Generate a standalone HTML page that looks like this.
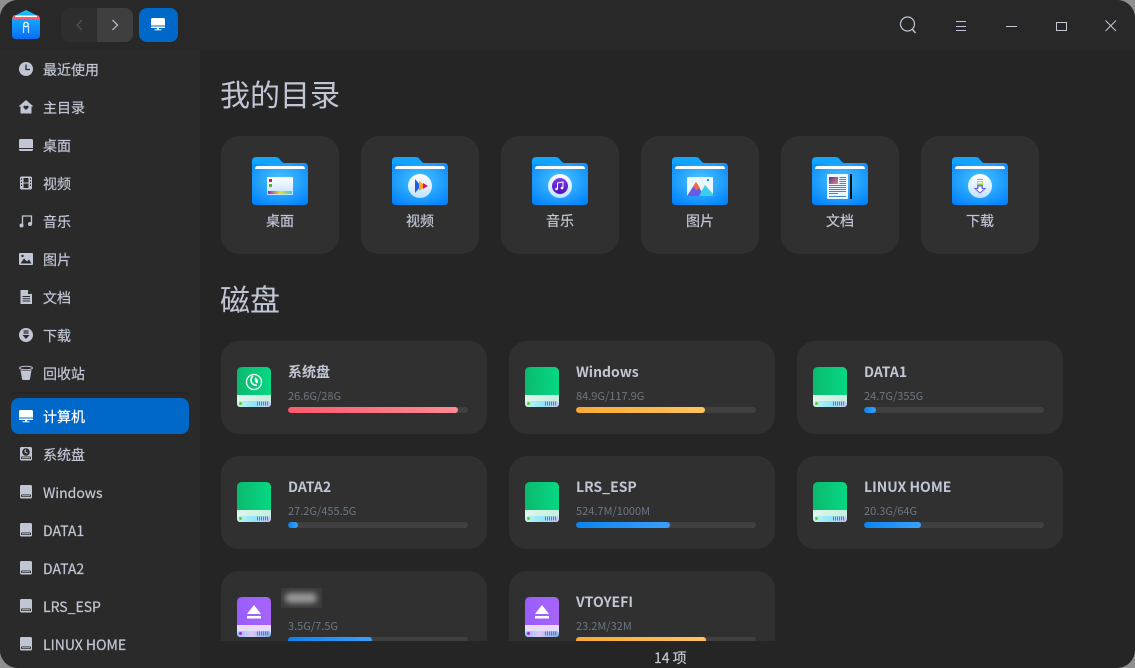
<!DOCTYPE html>
<html lang="zh"><head><meta charset="utf-8"><title>文件管理器</title>
<style>
html,body{margin:0;padding:0;width:1135px;height:668px;overflow:hidden;background:#8f8f8f}
*{box-sizing:border-box}
#w{position:relative;width:1135px;height:668px;background:#252525;border-radius:18px;overflow:hidden;font-family:"Noto Sans CJK SC","Liberation Sans",sans-serif;color:#c0c6d4}
.a{position:absolute}
.s{position:absolute;left:43px;font-size:14px;line-height:20px;white-space:nowrap;-webkit-text-stroke:.2px currentColor}
.i{position:absolute;left:18px;width:16px;height:16px}
.c{position:absolute;top:136px;width:118px;height:118px;background:#303030;border-radius:18px}
.c svg{position:absolute;left:31px;top:21px}
.c span{position:absolute;left:0;width:100%;top:75px;text-align:center;font-size:14px;line-height:20px;-webkit-text-stroke:.2px currentColor}
.d{position:absolute;width:266px;height:93px;background:#303030;border-radius:18px}
.d svg{position:absolute;left:16px;top:26px}
.n{position:absolute;left:67px;top:21px;font-size:14px;line-height:20px;font-weight:700;white-space:nowrap}
.z{position:absolute;left:67px;top:47px;font-size:11px;line-height:16px;color:#6c7684;white-space:nowrap}
.b{position:absolute;left:67px;top:66px;width:180px;height:6px;border-radius:3px;background:#404040;overflow:hidden}
.b i{display:block;height:6px;border-radius:3px}
.bl{background:linear-gradient(90deg,#0a84f0,#3aa0ff)}
.or{background:linear-gradient(90deg,#f9ab33,#ffc45c)}
.re{background:linear-gradient(90deg,#ff5a6c,#ff8a94)}
h2{position:absolute;left:220px;margin:0;font-size:30px;line-height:40px;font-weight:400;color:#c0c6d4;white-space:nowrap}
</style></head><body>
<svg width="0" height="0" style="position:absolute">
<defs>
<radialGradient id="fg" cx=".5" cy=".4" r=".7"><stop offset="0" stop-color="#4cc6ff"/><stop offset="1" stop-color="#0383fb"/></radialGradient>
<linearGradient id="ft" x1="0" y1="0" x2="0" y2="1"><stop offset="0" stop-color="#10a8ff"/><stop offset="1" stop-color="#0a84f0"/></linearGradient>
<linearGradient id="gg" x1="0" y1="0" x2="1" y2="0"><stop offset="0" stop-color="#0bb96e"/><stop offset="1" stop-color="#05d884"/></linearGradient>
<linearGradient id="pg" x1="0" y1="0" x2="1" y2="0"><stop offset="0" stop-color="#9a5cff"/><stop offset="1" stop-color="#a765f6"/></linearGradient>
<linearGradient id="rb" x1="0" y1="0" x2="1" y2="0"><stop offset="0" stop-color="#a020d0"/><stop offset=".5" stop-color="#e8e020"/><stop offset="1" stop-color="#40c8e0"/></linearGradient>
<linearGradient id="wh" x1="0" y1="0" x2="0" y2="1"><stop offset="0" stop-color="#fff"/><stop offset="1" stop-color="#bfe2fb"/></linearGradient>
<linearGradient id="dp" x1="0" y1="0" x2="0" y2="1"><stop offset="0" stop-color="#7a3cf0"/><stop offset="1" stop-color="#4a10b8"/></linearGradient>
<linearGradient id="ph" x1="0" y1="0" x2="1" y2="1"><stop offset="0" stop-color="#5a2ab8"/><stop offset="1" stop-color="#f08a50"/></linearGradient>
<linearGradient id="gb" x1="0" y1="0" x2="1" y2="0"><stop offset="0" stop-color="#dff5ee"/><stop offset="1" stop-color="#c6eedd"/></linearGradient>
<linearGradient id="gc" x1="0" y1="0" x2="1" y2="0"><stop offset="0" stop-color="#c5f0ee"/><stop offset=".5" stop-color="#90e6fa"/><stop offset="1" stop-color="#c8c8f0"/></linearGradient>
<linearGradient id="pc" x1="0" y1="0" x2="1" y2="0"><stop offset="0" stop-color="#8ec0f0"/><stop offset=".4" stop-color="#d8c8fa"/><stop offset="1" stop-color="#80b0ea"/></linearGradient>
<symbol id="folder" viewBox="0 0 56 48">
<path d="M4 0H24C28 0 28.500 6 33 6H52C54.500 6 56 7.500 56 10V44C56 46.500 54.500 48 52 48H4C1.500 48 0 46.500 0 44V4C0 1.500 1.500 0 4 0Z" fill="url(#ft)"/>
<path d="M0 10C0 8 1.500 7 4 7H52C54.500 7 56 8 56 10V44C56 46.500 54.500 48 52 48H4C1.500 48 0 46.500 0 44Z" fill="url(#fg)"/>
<path d="M3 12C3 10 4 9 6 9H50C52 9 53 10 53 12Z" fill="#f4fbff"/>
</symbol>
<symbol id="gdisk" viewBox="0 0 34 40">
<path d="M5 0H29C32 0 34 2 34 5V30H0V5C0 2 2 0 5 0Z" fill="url(#gg)"/>
<path d="M0 28H34V36C34 38.500 32.500 40 30 40H4C1.500 40 0 38.500 0 36Z" fill="url(#gb)"/>
<rect x="0" y="34" width="34" height="6" rx="3" fill="url(#gc)"/>
<circle cx="3.500" cy="36.500" r="1.500" fill="#5bcf2a"/>
<path d="M20.500 34.500v4M22.500 34.500v4M24.500 34.500v4M26.500 34.500v4M28.500 34.500v4M30.500 34.500v4" stroke="#1e90f0" stroke-width="1"/>
</symbol>
<symbol id="pdisk" viewBox="0 0 34 40">
<path d="M5 0H29C32 0 34 2 34 5V30H0V5C0 2 2 0 5 0Z" fill="url(#pg)"/>
<path d="M0 28H34V36C34 38.500 32.500 40 30 40H4C1.500 40 0 38.500 0 36Z" fill="#e8dcfa"/>
<rect x="0" y="34" width="34" height="6" rx="3" fill="url(#pc)"/>
<circle cx="3.500" cy="36.500" r="1.500" fill="#b020e0"/>
<path d="M20.500 34.500v4M22.500 34.500v4M24.500 34.500v4M26.500 34.500v4M28.500 34.500v4M30.500 34.500v4" stroke="#1e90f0" stroke-width="1"/>
<path d="M17 8 24 17H10Z" fill="#fff"/><rect x="10" y="19" width="14" height="2.500" fill="#fff"/>
</symbol>
<symbol id="hd" viewBox="0 0 16 16">
<path d="M3.500 1H12.500C13.500 1 14 1.500 14 2.500V13C14 14 13.500 14.500 12.500 14.500H3.500C2.500 14.500 2 14 2 13V2.500C2 1.500 2.500 1 3.500 1Z" fill="#c0c6d4"/>
<rect x="3" y="10.500" width="10" height="2.500" rx="1" fill="#2a2a2a"/><rect x="4" y="11.300" width="8" height="1" fill="#c0c6d4"/>
</symbol>
</defs></svg>
<div id="w">
<!-- sidebar -->
<div class="a" style="left:0;top:0;width:200px;height:668px;background:#2a2a2a"></div>
<div class="a" style="left:0;top:0;width:1135px;height:50px;background:#282828"></div>
<!-- logo -->
<svg class="a" style="left:12px;top:10px" width="28" height="30" viewBox="0 0 28 30">
<defs><linearGradient id="lg" x1="0" y1="0" x2="0" y2="1"><stop offset="0" stop-color="#19c0ff"/><stop offset="1" stop-color="#0a6cf5"/></linearGradient></defs>
<path d="M2 6 14 0 26 6C27.500 7 28 8 28 9V25C28 27.500 26.500 29 24 29H4C1.500 29 0 27.500 0 25V9C0 8 .5 7 2 6Z" fill="url(#lg)"/>
<path d="M1 5.500H27L27.500 9H.5Z" fill="#ff5a6c"/><path d="M3 5.500H25V7H3Z" fill="#fff"/>
<circle cx="14" cy="14.500" r="2.200" fill="none" stroke="#e6f6ff" stroke-width="1.400"/>
<path d="M11.500 15V23M16.500 16V23" stroke="#bfe6ff" stroke-width="1.200"/>
</svg>
<!-- nav -->
<div class="a" style="left:61px;top:8px;width:36px;height:34px;background:#2e2e2e;border-radius:8px 0 0 8px"></div>
<div class="a" style="left:97px;top:8px;width:36px;height:34px;background:#3f3f3f;border-radius:0 8px 8px 0"></div>
<svg class="a" style="left:61px;top:8px" width="72" height="34" viewBox="0 0 72 34" fill="none"><path d="M21 12 16 17 21 22" stroke="#585858" stroke-width="1.200"/><path d="M51.500 12 56.500 17 51.500 22" stroke="#c0c6d4" stroke-width="1.200"/></svg>
<div class="a" style="left:139px;top:8px;width:39px;height:34px;background:#0068c8;border-radius:8px"></div>
<svg class="a" style="left:150px;top:16px" width="16" height="16" viewBox="0 0 16 16"><path d="M2.500 2H13.500C14.300 2 15 2.700 15 3.500V9.500H1V3.500C1 2.700 1.700 2 2.500 2Z" fill="#fff"/><rect x="1" y="10.500" width="14" height="1.500" fill="#fff"/><rect x="7" y="12" width="2" height="1.500" fill="#fff"/><rect x="4.500" y="13.300" width="7" height="1" fill="#fff"/></svg>
<!-- window controls -->
<svg class="a" style="left:880px;top:0" width="255" height="50" viewBox="0 0 255 50" fill="none" stroke="#c0c6d4" stroke-width="1">
<circle cx="27.500" cy="24" r="7" stroke-width="1.200"/><path d="M32.500 29.500 35.500 33" stroke-width="1.400"/>
<path d="M76 21.500H86M76 26.500H86M76 30.500H86"/>
<path d="M126 26.500H137"/>
<rect x="176.500" y="22.500" width="10" height="8"/>
<path d="M225.500 20.500 236 31M236 20.500 225.500 31"/>
</svg>
<!-- sidebar icons -->
<svg class="i" style="top:61px" viewBox="0 0 16 16"><circle cx="8" cy="8" r="7" fill="#c0c6d4"/><path d="M8 3.500V8.500H12" stroke="#2a2a2a" stroke-width="1.300" fill="none"/></svg>
<div class="s" style="top:60px">最近使用</div>
<svg class="i" style="top:99px" viewBox="0 0 16 16"><path d="M8 1 15.500 7.500H13.500V14.500H2.500V7.500H.5Z" fill="#c0c6d4"/><path d="M8 11 5.500 8.500C5 7 6.500 6 8 7.200 9.500 6 11 7 10.500 8.500Z" fill="#2a2a2a"/></svg>
<div class="s" style="top:98px">主目录</div>
<svg class="i" style="top:137px" viewBox="0 0 16 16"><path d="M2.500 2H13.500C14.500 2 15 2.500 15 3.500V12.500C15 13.500 14.500 14 13.500 14H2.500C1.500 14 1 13.500 1 12.500V3.500C1 2.500 1.500 2 2.500 2Z" fill="#c0c6d4"/><rect x="1" y="11" width="14" height="1" fill="#2a2a2a"/></svg>
<div class="s" style="top:136px">桌面</div>
<svg class="i" style="top:175px" viewBox="0 0 16 16"><rect x="2" y="1.500" width="12" height="13" rx="1.500" fill="#c0c6d4"/><path d="M3.500 3.500v9M12.500 3.500v9" stroke="#2a2a2a" stroke-width="1" stroke-dasharray="1.500 1.500"/><rect x="5.500" y="3" width="5" height="4.500" fill="#2a2a2a"/><rect x="5.500" y="8.500" width="5" height="4.500" fill="#2a2a2a"/></svg>
<div class="s" style="top:174px">视频</div>
<svg class="i" style="top:213px" viewBox="0 0 16 16"><path d="M4.500 12.500V3H13.500V11" stroke="#c0c6d4" stroke-width="1.300" fill="none"/><circle cx="3.500" cy="12.500" r="2" fill="#c0c6d4"/><circle cx="12" cy="11" r="2" fill="#c0c6d4"/></svg>
<div class="s" style="top:212px">音乐</div>
<svg class="i" style="top:251px" viewBox="0 0 16 16"><rect x="1" y="2" width="14" height="12" rx="1" fill="#c0c6d4"/><path d="M2.500 12.500 6 7.500 9 10.500 11 8.500 13.500 12.500Z" fill="#2a2a2a"/><circle cx="4.500" cy="5" r="1.200" fill="#2a2a2a"/></svg>
<div class="s" style="top:250px">图片</div>
<svg class="i" style="top:289px" viewBox="0 0 16 16"><path d="M2.500 1H10L14 5V15H2.500Z" fill="#c0c6d4"/><path d="M10 1V5H14" fill="#2a2a2a"/><path d="M4.500 7.500H12M4.500 9.800H12M4.500 12H12" stroke="#2a2a2a"/></svg>
<div class="s" style="top:288px">文档</div>
<svg class="i" style="top:327px" viewBox="0 0 16 16"><circle cx="8" cy="8" r="7" fill="#c0c6d4"/><path d="M5.500 4H10.500M5.500 6H10.500" stroke="#2a2a2a" stroke-width="1.200"/><path d="M4.500 8H11.500L8 12Z" fill="#2a2a2a"/></svg>
<div class="s" style="top:326px">下载</div>
<svg class="i" style="top:365px" viewBox="0 0 16 16"><ellipse cx="8" cy="3" rx="6.500" ry="1.800" fill="none" stroke="#c0c6d4"/><path d="M2.500 5C5 6 11 6 13.500 5L12 14C11.800 15 11 15 10 15H6C5 15 4.200 15 4 14Z" fill="#c0c6d4"/></svg>
<div class="s" style="top:364px">回收站</div>
<div class="a" style="left:10px;top:392px;width:180px;height:2px;background:#252525"></div>
<div class="a" style="left:11px;top:398px;width:178px;height:36px;background:#0068c8;border-radius:8px"></div>
<svg class="i" style="top:408px" viewBox="0 0 16 16"><path d="M2.500 2H13.500C14.300 2 15 2.700 15 3.500V9.500H1V3.500C1 2.700 1.700 2 2.500 2Z" fill="#fff"/><rect x="1" y="10.500" width="14" height="1.500" fill="#fff"/><rect x="7" y="12" width="2" height="1.500" fill="#fff"/><rect x="4.500" y="13.300" width="7" height="1" fill="#fff"/></svg>
<div class="s" style="top:407px;color:#fff">计算机</div>
<svg class="i" style="top:446px" viewBox="0 0 16 16"><use href="#hd"/><circle cx="8" cy="6" r="3.800" fill="#2a2a2a"/><path d="M8 3.500C6 5 7 7 9.500 7" stroke="#c0c6d4" fill="none"/></svg>
<div class="s" style="top:445px">系统盘</div>
<svg class="i" style="top:484px" viewBox="0 0 16 16"><use href="#hd"/></svg><div class="s" style="top:483px">Windows</div>
<svg class="i" style="top:522px" viewBox="0 0 16 16"><use href="#hd"/></svg><div class="s" style="top:521px">DATA1</div>
<svg class="i" style="top:560px" viewBox="0 0 16 16"><use href="#hd"/></svg><div class="s" style="top:559px">DATA2</div>
<svg class="i" style="top:598px" viewBox="0 0 16 16"><use href="#hd"/></svg><div class="s" style="top:597px">LRS_ESP</div>
<svg class="i" style="top:636px" viewBox="0 0 16 16"><use href="#hd"/></svg><div class="s" style="top:635px">LINUX HOME</div>

<h2 style="top:73px">我的目录</h2>
<div class="c" style="left:221px"><svg width="56" height="48"><use href="#folder"/><rect x="15" y="20" width="26" height="18" rx="1" fill="url(#wh)"/><rect x="17" y="22" width="3" height="3" fill="#d02030"/><rect x="17" y="27" width="3" height="3" fill="#60b020"/><rect x="16" y="34" width="24" height="3" fill="url(#rb)"/></svg><span>桌面</span></div>
<div class="c" style="left:361px"><svg width="56" height="48"><use href="#folder"/><circle cx="28" cy="29" r="12" fill="url(#wh)"/><path d="M23 22 29 29 23 36Z" fill="#2060e0"/><path d="M27 24 34 29 27 34Z" fill="#f9a820"/><path d="M31 26 36 29 31 32Z" fill="#e0106a"/></svg><span>视频</span></div>
<div class="c" style="left:501px"><svg width="56" height="48"><use href="#folder"/><circle cx="28" cy="29" r="12" fill="url(#wh)"/><circle cx="28" cy="29" r="8" fill="url(#dp)"/><path d="M25.500 32V26L31 25V31" stroke="#fff" fill="none"/><circle cx="24.500" cy="32" r="1.300" fill="#fff"/><circle cx="30" cy="31" r="1.300" fill="#fff"/></svg><span>音乐</span></div>
<div class="c" style="left:641px"><svg width="56" height="48"><use href="#folder"/><rect x="15" y="20" width="26" height="19" rx="1" fill="#eaf6fd"/><path d="M15 39 24 25 32 39Z" fill="#6a5ae8"/><path d="M21.500 29 24 25 28 31 24 33Z" fill="#f2683a"/><path d="M27 39 33 28 41 37V39Z" fill="#38cfe8"/><rect x="35" y="22" width="2" height="2" fill="#2a90e0"/></svg><span>图片</span></div>
<div class="c" style="left:781px"><svg width="56" height="48"><use href="#folder"/><rect x="15" y="17" width="21" height="25" rx="1" fill="#eef7fd"/><rect x="17" y="20" width="9" height="7" fill="url(#ph)"/><path d="M27.500 20.500H34M27.500 22.500H34M27.500 24.500H34M27.500 26.500H34M17 28.500H34M17 30.500H34M17 32.500H34M17 34.500H34M17 36.500H26M17 39.500H34" stroke="#3a8ad0"/><rect x="38" y="17" width="2" height="25" fill="#101018"/></svg><span>文档</span></div>
<div class="c" style="left:921px"><svg width="56" height="48"><use href="#folder"/><circle cx="28" cy="29" r="12" fill="url(#wh)"/><path d="M25 22.500H31" stroke="#f08060" stroke-width="1"/><rect x="25.500" y="24.500" width="5" height="2.500" fill="none" stroke="#d8c840"/><rect x="25.500" y="28" width="5" height="3" fill="none" stroke="#50c080"/><path d="M23 31.500H26V29H30V31.500H33L28 36Z" fill="#fff" stroke="#6a5ae8"/></svg><span>下载</span></div>

<h2 style="top:278px">磁盘</h2>
<div class="a" style="left:200px;top:320px;width:935px;height:321px;overflow:hidden">
<div class="d" style="left:21px;top:21px"><svg width="34" height="40"><use href="#gdisk"/><circle cx="17" cy="15" r="7.500" fill="none" stroke="#fff" stroke-width="1.300"/><path d="M16 9C12.500 12 13.500 18 20 18.500" fill="none" stroke="#fff" stroke-width="1.600"/><path d="M18 10.500C21 11.500 22 15 20 16.500 18.500 15.500 17 14 18 10.500Z" fill="#fff"/></svg><div class="n">系统盘</div><div class="z">26.6G/28G</div><div class="b"><i class="re" style="width:170px"></i></div></div>
<div class="d" style="left:309px;top:21px"><svg width="34" height="40"><use href="#gdisk"/></svg><div class="n">Windows</div><div class="z">84.9G/117.9G</div><div class="b"><i class="or" style="width:129px"></i></div></div>
<div class="d" style="left:597px;top:21px"><svg width="34" height="40"><use href="#gdisk"/></svg><div class="n">DATA1</div><div class="z">24.7G/355G</div><div class="b"><i class="bl" style="width:12px"></i></div></div>
<div class="d" style="left:21px;top:136px"><svg width="34" height="40"><use href="#gdisk"/></svg><div class="n">DATA2</div><div class="z">27.2G/455.5G</div><div class="b"><i class="bl" style="width:10px"></i></div></div>
<div class="d" style="left:309px;top:136px"><svg width="34" height="40"><use href="#gdisk"/></svg><div class="n">LRS_ESP</div><div class="z">524.7M/1000M</div><div class="b"><i class="bl" style="width:94px"></i></div></div>
<div class="d" style="left:597px;top:136px"><svg width="34" height="40"><use href="#gdisk"/></svg><div class="n">LINUX HOME</div><div class="z">20.3G/64G</div><div class="b"><i class="bl" style="width:57px"></i></div></div>
<div class="d" style="left:21px;top:251px"><svg width="34" height="40"><use href="#pdisk"/></svg><div class="a" style="left:60px;top:17px;width:41px;height:20px;background:#3a3a3a;overflow:hidden"><div class="a" style="left:4px;top:5px;width:32px;height:10px;background:#9a9a9a;border-radius:5px;filter:blur(3px)"></div></div><div class="z">3.5G/7.5G</div><div class="b"><i class="bl" style="width:84px"></i></div></div>
<div class="d" style="left:309px;top:251px"><svg width="34" height="40"><use href="#pdisk"/></svg><div class="n">VTOYEFI</div><div class="z">23.2M/32M</div><div class="b"><i class="or" style="width:130px"></i></div></div>
</div>
<div class="a" style="left:654px;top:648px;font-size:14px;line-height:20px;white-space:nowrap;-webkit-text-stroke:.2px currentColor">14 项</div>
</div>
</body></html>
